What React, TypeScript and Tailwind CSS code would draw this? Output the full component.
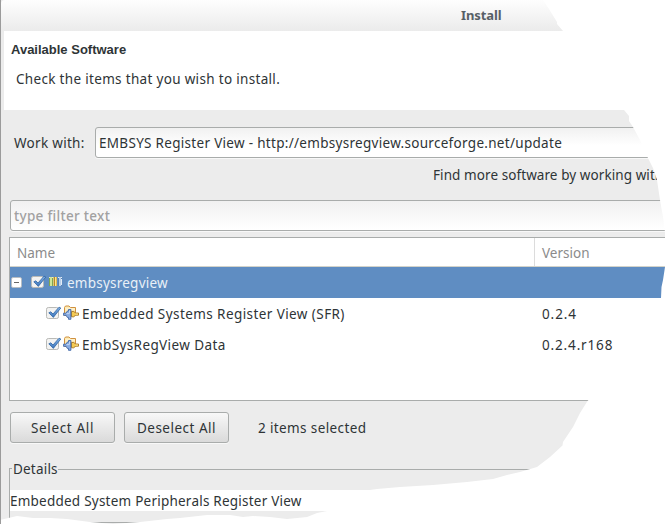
import type { ReactNode } from 'react';

function Checkbox() {
  return (
    <svg width="16" height="16" viewBox="0 0 16 16" className="block shrink-0">
      <defs>
        <linearGradient id="tick" x1="0" y1="0" x2="0" y2="1">
          <stop offset="0" stopColor="#86b5e8" />
          <stop offset="1" stopColor="#3a74ba" />
        </linearGradient>
      </defs>
      <rect x=".5" y="2.5" width="12" height="11" rx="1.8" fill="#f3f3f2" stroke="#b9bab7" />
      <path d="M2.8 7.8 4.8 6.8 7 9 13 2.2 14.8 3 7.3 12.4Z" fill="url(#tick)" stroke="#2f64a5" strokeWidth=".8" strokeLinejoin="round" />
    </svg>
  );
}

function CategoryIcon() {
  return (
    <svg width="15" height="12" viewBox="0 0 15 12" className="block shrink-0">
      <path d="M1 1h4v9H1z" fill="#7fa552" />
      <path d="M2 1h2v9H2z" fill="#cfe59a" />
      <path d="M1 1h1v1H1zM4 1h1v1H4z" fill="#e6eec4" />
      <path d="M6 1h3v9H6z" fill="#b98a26" />
      <path d="M7 1h1.5v9H7z" fill="#ffe58a" />
      <path d="M5 1h1v9H5z" fill="#d9c684" />
      <path d="M10 1h4v9h-4z" fill="#5780b0" />
      <path d="M11 1h2v9h-2z" fill="#b9d0ea" />
      <path d="M10 1h1v1h-1zM13 1h1v1h-1zM13 3h1v6h-1z" fill="#e3ecf5" />
    </svg>
  );
}

function FeatureIcon() {
  return (
    <svg width="16" height="16" viewBox="0 0 16 16" className="block shrink-0">
      <path d="M1.5 10.5v-8l1-1.5H6l1.5 1.5h5v8z" fill="#fdeab5" stroke="#d0913f" />
      <path d="M2.5 4H12" stroke="#fff8de" />
      <path d="M8.5 6.5h2.3l1.7 1.5h3v2.2h-3l-1.7 1.6H8.5z" fill="#f5ca50" stroke="#a67622" strokeWidth=".9" />
      <path d="M12 9.1h3" stroke="#fff0a8" strokeWidth=".8" />
      <path d="M.4 8.2H3L4.4 6h1.1V4.5h2.4v9.8H5.5v-1.8H4.4L3 10.3H.4z" fill="#88abe0" stroke="#4168a8" strokeWidth=".9" />
      <path d="M3.5 8.6h2.8M6.5 5.5v3" stroke="#c2d6f2" />
    </svg>
  );
}

function Button({ children, tracking }: { children: ReactNode; tracking: string }) {
  return (
    <button className={`flex h-[31px] w-[105px] items-center justify-center rounded-[3px] border border-[#a9acab] bg-linear-to-b from-[#f8f8f8] to-[#dadada] shadow-[0_1px_0_#f8f8f8] ${tracking}`}>
      {children}
    </button>
  );
}

function FeatureRow({ name, version, nameTracking, versionTracking }: { name: string; version: string; nameTracking: string; versionTracking: string }) {
  return (
    <div className="flex h-[31px] items-center">
      <div className="flex w-[532px] items-center pl-9">
        <span className="pb-0.5"><Checkbox /></span>
        <span className="ml-px pb-0.5"><FeatureIcon /></span>
        <span className={`ml-[3px] ${nameTracking}`}>{name}</span>
      </div>
      <span className={versionTracking}>{version}</span>
    </div>
  );
}

export default function App() {
  return (
    <main className="relative h-[524px] w-[666px] overflow-hidden whitespace-nowrap border-l border-[#9b9b9b] bg-[#ececec] font-['Noto_Sans','Open_Sans',sans-serif] text-[13.5px] leading-[20px] text-[#2e3436]">
      <header className="h-[31px] rounded-tl-[4px] bg-linear-to-b from-[#fefefe] to-[#ebebeb] pl-[460px] pt-[5px] text-[13px] font-bold tracking-[-0.1px] text-[#576066]">
        Install
      </header>
      <section className="ml-[3px] h-[79px] bg-white pt-[9px]">
        <h1 className="ml-[7px] font-['Liberation_Sans',sans-serif] text-[13px] font-bold">Available Software</h1>
        <p className="ml-3 mt-[9px] tracking-[0.32px]">Check the items that you wish to install.</p>
      </section>
      <section className="mt-[17px] flex h-[31px] items-center pl-[13px]">
        <label className="w-[81px] shrink-0 tracking-[0.3px]">Work with:</label>
        <div className="flex h-[31px] w-[600px] shrink-0 items-center rounded-[3px] border border-[#a9acab] bg-linear-to-b from-[#f1f1f1] to-white to-60% pl-[3px] tracking-[0.3px] shadow-[0_1px_0_#f8f8f8]">
          EMBSYS Register View - http://embsysregview.sourceforge.net/update
        </div>
      </section>
      <p className="mt-[7px] h-5 pl-[432px] tracking-[0.08px]">Find more software by working with</p>
      <div className="ml-[9px] mt-[15px] flex h-[31px] w-[700px] items-center rounded-[3px] border border-[#a9acab] bg-linear-to-b from-[#f1f1f1] to-white pl-[3px] font-medium tracking-[0.3px] text-[#a1a1a1] shadow-[0_1px_0_#f8f8f8]">
        type filter text
      </div>
      <section className="ml-2 mt-[6px] h-[164px] w-[700px] border border-[#a9acab] bg-white">
        <div className="flex h-[29px] border-b border-[#d3d3ca] text-[#8b8b8b]">
          <span className="w-[525px] border-r border-[#dcdcdc] pl-[7px] pt-[5px]">Name</span>
          <span className="pl-[7px] pt-[5px]">Version</span>
        </div>
        <div className="flex h-[31px] items-center bg-[#5f8dc2] pl-px text-[#e9f0f7]">
          <svg width="11" height="11" viewBox="0 0 11 11">
            <rect x=".5" y=".5" width="10" height="10" rx="1.5" fill="#fff" stroke="#b6bdc4" />
            <path d="M3 5.5h5" stroke="#666" />
          </svg>
          <span className="ml-[9px] pb-0.5"><Checkbox /></span>
          <span className="ml-[1px] pb-0.5"><CategoryIcon /></span>
          <span className="ml-1 tracking-[0.23px]">embsysregview</span>
        </div>
        <FeatureRow name="Embedded Systems Register View (SFR)" version="0.2.4" nameTracking="tracking-[0.42px]" versionTracking="tracking-[0.9px]" />
        <FeatureRow name="EmbSysRegView Data" version="0.2.4.r168" nameTracking="tracking-[0.4px]" versionTracking="tracking-[0.85px]" />
      </section>
      <section className="ml-[9px] mt-[11px] flex items-center gap-[9px]">
        <Button tracking="tracking-[0.65px]">Select All</Button>
        <Button tracking="tracking-[0.5px]">Deselect All</Button>
        <span className="ml-5 tracking-[0.38px]">2 items selected</span>
      </section>
      <section className="ml-2 mt-4 h-[65px]">
        <div className="flex h-5 items-center">
          <span className="h-[11px] w-[3px] self-end border-l border-t border-[#a9acab]" />
          <span className="w-[46px] pl-px tracking-[0.2px]">Details</span>
          <span className="h-px flex-1 bg-[#a9acab]" />
        </div>
        <div className="h-[45px] border-l border-[#a9acab] pt-[11px]">
          <p className="h-[21px] bg-white pt-px tracking-[0.23px]">Embedded System Peripherals Register View</p>
          <div className="ml-[78px] mt-[11px] h-px w-14 bg-[#a9acab]" />
        </div>
      </section>
      <svg className="pointer-events-none absolute -left-px top-0" width="666" height="524" viewBox="0 0 666 524">
        <path
          fill="#fff"
          d="M543 0L549 9L557 22L557 24L563 31L575 60L600 90L624 110L629 116L629 121L633 127L640 140L644 150L648 158L653 168L657 180L660 200L663 217L665 232L665 267L663 280L661.5 287L661 298L650 340L587.5 401L580 413L573 427L563 442L562.5 445.5L550 457L537 467L520 472L507 475L493 479L467 482L433 485L400 487L377 489L370 490L350 505L327 511L317 513L307 517L287 519L270 517L253 516L243 517L230 515L207 515L180 518L167 519L140 522L113 524L90 522L67 519L50 518L33 518L17 516L0 520V524H666V0Z"
        />
      </svg>
    </main>
  );
}
